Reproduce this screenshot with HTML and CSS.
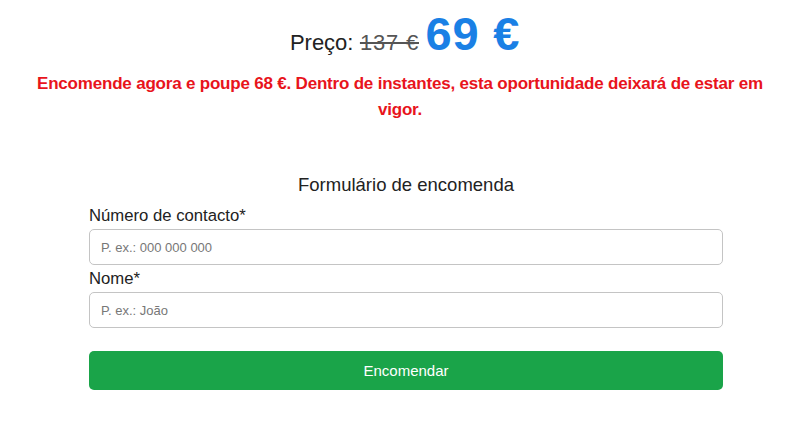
FILE: index.html
```html
<!DOCTYPE html>
<html lang="pt">
<head>
  <meta charset="UTF-8" />
  <meta name="viewport" content="width=device-width, initial-scale=1" />
  <title>Formulário de encomenda</title>
  <link rel="stylesheet" href="styles.css">
</head>
<body>

<div class="offer">
  <div class="price">
    <span class="price-label">Preço:</span>
    <span class="price-old">137 €</span>
    <span class="price-new">69 €</span>
  </div>
  <p class="promo">Encomende agora e poupe 68 €. Dentro de instantes, esta oportunidade deixará de estar em vigor.</p>
</div>

<form class="order-form" onsubmit="return false;">
  <h3>Formulário de encomenda</h3>

  <label for="phone">Número de contacto*</label>
  <input type="tel" id="phone" placeholder="P. ex.: 000 000 000" />

  <label for="name">Nome*</label>
  <input type="text" id="name" placeholder="P. ex.: João" />

  <button class="btn-order" type="submit">Encomendar</button>
</form>

</body>
</html>
```

FILE: styles.css
```css
body {
  font-family: "Liberation Sans", Arial, sans-serif;
  background: #fff;
  color: #222;
  margin: 0;
}
.offer {
  text-align: center;
  padding: 10px 30px 0;
}
.price {
  padding-left: 10px;
  line-height: 48px;
}
.price-label {
  font-size: 22px;
  color: #222;
  margin-right: 2px;
}
.price-old {
  font-size: 22px;
  letter-spacing: 0.8px;
  color: #555;
  text-decoration: line-through;
  margin-right: 2px;
}
.price-new {
  font-size: 47px;
  font-weight: bold;
  letter-spacing: 0.8px;
  color: #1a80e5;
}
.promo {
  margin: 2px 0 0;
  color: #e8141c;
  font-size: 17px;
  font-weight: bold;
  letter-spacing: -0.2px;
  line-height: 26px;
}
.order-form {
  width: 634px;
  margin: 51px 0 0 89px;
}
h3 {
  margin: 0 0 9px;
  font-size: 18.5px;
  font-weight: normal;
  text-align: center;
  color: #222;
}
label {
  display: block;
  font-size: 16.7px;
  line-height: 22px;
  color: #222;
  margin-bottom: 2px;
}
input[type="text"], input[type="tel"] {
  display: block;
  width: 100%;
  height: 36px;
  padding: 0 11px;
  margin-bottom: 3px;
  border: 1px solid #c4c4c4;
  border-radius: 5px;
  font-family: inherit;
  font-size: 13px;
  box-sizing: border-box;
}
input::placeholder {
  color: #777;
}
.btn-order {
  display: block;
  width: 100%;
  height: 39px;
  margin-top: 23px;
  background-color: #1aa449;
  color: #fff;
  border: none;
  border-radius: 5px;
  font-family: inherit;
  font-size: 15px;
  cursor: pointer;
}
.btn-order:hover {
  background-color: #168f3f;
}
```
